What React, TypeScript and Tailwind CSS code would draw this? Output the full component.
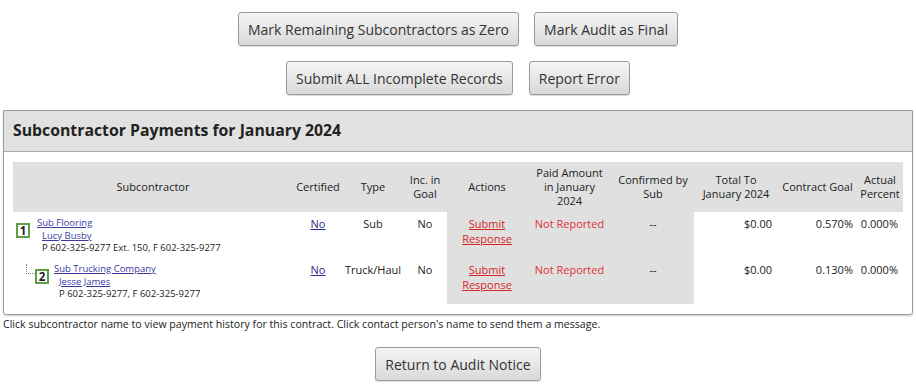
import React from "react";

const font = { fontFamily: '"Open Sans", "Liberation Sans", sans-serif' };

function Btn({ children }: { children: React.ReactNode }) {
  return (
    <button className="h-[34px] px-[9px] rounded-[3px] border border-[#9a9a9a] bg-gradient-to-b from-[#f5f5f5] to-[#d9d9d9] text-[14px] text-[#333] shadow-[0_1px_1px_rgba(0,0,0,0.15)]">
      {children}
    </button>
  );
}

function Badge({ n }: { n: number }) {
  return (
    <span className="flex h-[15px] w-[14px] shrink-0 items-center justify-center border-2 border-[#5f9e48] text-[11.5px] font-bold leading-none text-[#222]">
      {n}
    </span>
  );
}

const rows = [
  {
    n: 1,
    child: false,
    name: "Sub Flooring",
    contact: "Lucy Busby",
    phone: "P 602-325-9277 Ext. 150, F 602-325-9277",
    type: "Sub",
    goal: "0.570%",
  },
  {
    n: 2,
    child: true,
    name: "Sub Trucking Company",
    contact: "Jesse James",
    phone: "P 602-325-9277, F 602-325-9277",
    type: "Truck/Haul",
    goal: "0.130%",
  },
];

export default function App() {
  return (
    <div className="w-[916px] min-h-[387px] bg-white text-[#222]" style={font}>
      <div className="flex flex-col items-center gap-[15px] pt-[12px]">
        <div className="flex gap-[15px]">
          <Btn>Mark Remaining Subcontractors as Zero</Btn>
          <Btn>Mark Audit as Final</Btn>
        </div>
        <div className="flex gap-[16px]">
          <Btn>Submit ALL Incomplete Records</Btn>
          <Btn>Report Error</Btn>
        </div>
      </div>

      <div className="mx-[3px] mt-[15px] rounded-b-[3px] border border-[#9c9c9c] shadow-[0_1px_2px_rgba(0,0,0,0.2)]">
        <div className="flex h-[41px] items-center border-b border-[#a8a8a8] bg-[#e1e1e1] px-[9px]">
          <h2 className="text-[15.8px] font-bold text-[#222]">Subcontractor Payments for January 2024</h2>
        </div>
        <div className="px-[9px] py-[10px]">
          <table className="w-[890px] table-fixed border-collapse text-[11px] leading-[14px]">
            <colgroup>
              <col className="w-[280px]" />
              <col className="w-[50px]" />
              <col className="w-[60px]" />
              <col className="w-[44px]" />
              <col className="w-[80px]" />
              <col className="w-[85px]" />
              <col className="w-[82px]" />
              <col className="w-[84px]" />
              <col className="w-[79px]" />
              <col className="w-[46px]" />
            </colgroup>
            <thead>
              <tr className="h-[50px] bg-[#e0e0e0] text-center font-normal">
                <th className="font-normal">Subcontractor</th>
                <th className="font-normal">Certified</th>
                <th className="font-normal">Type</th>
                <th className="font-normal">Inc. in Goal</th>
                <th className="font-normal">Actions</th>
                <th className="px-1 font-normal">Paid Amount in January 2024</th>
                <th className="font-normal">Confirmed by Sub</th>
                <th className="px-1 font-normal">Total To January 2024</th>
                <th className="font-normal">Contract Goal</th>
                <th className="font-normal">Actual Percent</th>
              </tr>
            </thead>
            <tbody>
              {rows.map((r) => (
                <tr key={r.n} className="h-[46px] align-top">
                  <td className="pl-[3px] pt-[5px]">
                    <div className="flex">
                      {r.child && (
                        <span className="ml-[10px] mt-[1px] h-[10px] w-[9px] shrink-0 border-b border-l border-dotted border-[#7d7db8]" />
                      )}
                      <span className="mt-[6px]">
                        <Badge n={r.n} />
                      </span>
                      <div className={r.child ? "ml-[5px] text-[9.5px] leading-[12.5px]" : "ml-[7px] text-[9.5px] leading-[12.5px]"}>
                        <a href="#" className="block text-[#3b3b9f] underline">{r.name}</a>
                        <div className="pl-[5px]">
                          <a href="#" className="block text-[#3b3b9f] underline">{r.contact}</a>
                          <div>{r.phone}</div>
                        </div>
                      </div>
                    </div>
                  </td>
                  <td className="pt-[5px] text-center">
                    <a href="#" className="text-[#2a2a8c] underline">No</a>
                  </td>
                  <td className="pt-[5px] text-center">{r.type}</td>
                  <td className="pt-[5px] text-center">No</td>
                  <td className="bg-[#e0e0e0] pt-[4px] text-center leading-[15px]">
                    <a href="#" className="text-[#d32626] underline">Submit Response</a>
                  </td>
                  <td className="bg-[#e0e0e0] pt-[5px] text-center text-[#df3234]">Not Reported</td>
                  <td className="bg-[#e0e0e0] pt-[5px] text-center">--</td>
                  <td className="pr-[6px] pt-[5px] text-right">$0.00</td>
                  <td className="pr-[4px] pt-[5px] text-right">{r.goal}</td>
                  <td className="pr-[5px] pt-[5px] text-right">0.000%</td>
                </tr>
              ))}
            </tbody>
          </table>
        </div>
      </div>

      <p className="mt-[2px] pl-[3px] text-[10.6px] leading-[14px] text-[#222]">
        Click subcontractor name to view payment history for this contract. Click contact person's name to send them a message.
      </p>

      <div className="mt-[16px] flex justify-center">
        <Btn>Return to Audit Notice</Btn>
      </div>
    </div>
  );
}
